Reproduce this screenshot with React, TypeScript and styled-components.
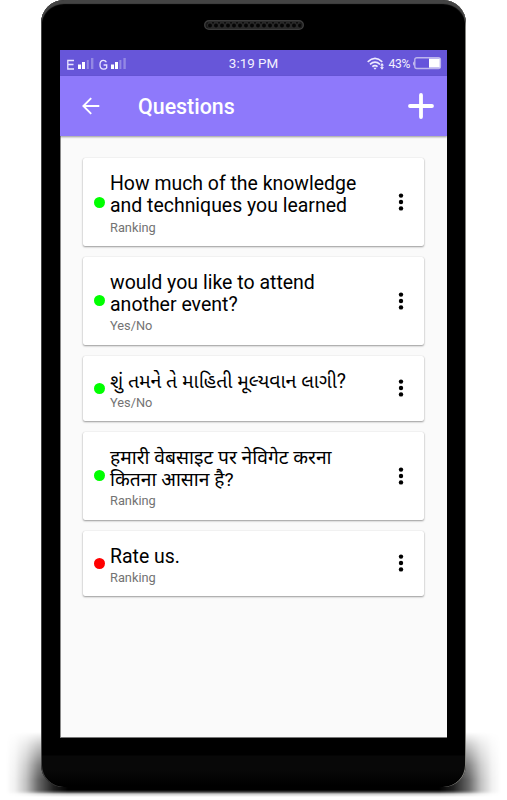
import React from "react";
import styled, { createGlobalStyle } from "styled-components";

const GlobalStyle = createGlobalStyle`
  * { box-sizing: border-box; }
  html, body { margin: 0; background: #fff; }
  body { font-family: Roboto, "Noto Sans", "Noto Sans Gujarati", "Noto Sans Devanagari", sans-serif; overflow: hidden; }
`;

const Stage = styled.div`
  position: relative;
  width: 507px;
  height: 800px;
  padding-left: 41px;
  background: #fff;
  overflow: hidden;
`;

const GroundShadow = styled.div`
  position: absolute;
  top: 732px;
  left: 6px;
  right: 6px;
  height: 65px;
  background: linear-gradient(
    to right,
    transparent 0, rgba(0, 0, 0, 0.06) 9px, rgba(0, 0, 0, 0.24) 20px,
    rgba(0, 0, 0, 0.58) 32px, rgba(0, 0, 0, 0.88) 48px, #000 62px,
    #000 calc(100% - 62px), rgba(0, 0, 0, 0.88) calc(100% - 48px), rgba(0, 0, 0, 0.58) calc(100% - 32px),
    rgba(0, 0, 0, 0.24) calc(100% - 20px), rgba(0, 0, 0, 0.06) calc(100% - 9px), transparent 100%
  );
  mask-image: linear-gradient(
    to bottom,
    transparent 0, rgba(0, 0, 0, 0.35) 13px, rgba(0, 0, 0, 0.8) 33px, #000 48px,
    #000 58px, rgba(0, 0, 0, 0.75) 60px, rgba(0, 0, 0, 0.2) 62px, transparent 65px
  );
`;

const Phone = styled.div`
  position: relative;
  width: 425px;
  height: 787px;
  border-radius: 23px 23px 22px 22px;
  background: linear-gradient(to bottom, #000 755px, #080808 756px, #080808 770px, #000 785px);
  box-shadow: inset 0 4px 1px #444, inset 1px 0 0 #484848, inset -1px 0 0 #8b8b86;
  padding: 20px 19px 0 20px;
  display: flex;
  flex-direction: column;
`;

const Speaker = styled.svg`
  display: block;
  align-self: center;
  width: 100px;
  height: 10px;
  margin-bottom: 20px;
  flex: none;
`;

const Screen = styled.div`
  width: 387px;
  margin-left: -1px;
  height: 688px;
  background: #fafafa;
  box-shadow: inset 0 -1px #777, inset 1px 0 #8a8a8a;
  overflow: hidden;
`;

const StatusBar = styled.header`
  height: 26px;
  background: #6756d9;
  color: #f3f1ff;
  display: grid;
  grid-template-columns: 1fr auto 1fr;
  align-items: center;
  padding: 0 5px;
`;

const StatusGroup = styled.div<{ $end?: boolean }>`
  display: flex;
  align-items: center;
  justify-content: ${(p) => (p.$end ? "flex-end" : "flex-start")};
`;

const SignalIcon = styled.svg`
  display: block;
  width: 62px;
  height: 14px;
`;

const Clock = styled.time`
  font-size: 13.4px;
  line-height: 26px;
  padding-top: 1px;
`;

const Percent = styled.span`
  font-size: 12.1px;
  line-height: 26px;
  margin: 0 3px 0 4px;
  letter-spacing: -0.3px;
`;

const Toolbar = styled.nav`
  height: 60px;
  background: #8e79fb;
  color: #fff;
  display: flex;
  align-items: center;
  padding: 0 13px 0 22px;
  box-shadow: 0 1px 2px rgba(0, 0, 0, 0.4);
`;

const Title = styled.h1`
  margin: 2px auto 0 38px;
  font-size: 21.4px;
  line-height: 28px;
  font-weight: 500;
`;

const IconButton = styled.button`
  appearance: none;
  padding: 0;
  border: 0;
  background: none;
  color: inherit;
  display: flex;
`;

const List = styled.ul`
  list-style: none;
  margin: 0;
  padding: 22px 23px 0 23px;
  display: flex;
  flex-direction: column;
  gap: 10.8px;
`;

const Card = styled.li<{ $lines: number }>`
  height: ${(p) => (p.$lines === 2 ? 88 : 65.4)}px;
  border-radius: 2px;
  background: #fff;
  box-shadow: 0 1px 2px rgba(0, 0, 0, 0.38), 0 0 1px rgba(0, 0, 0, 0.16);
  display: grid;
  grid-template-columns: 11px 1fr 6px;
  align-items: center;
  column-gap: 5px;
  padding: 0 20px 0 11px;
`;

const Dot = styled.span<{ $active: boolean }>`
  width: 11px;
  height: 11px;
  border-radius: 50%;
  background: ${(p) => (p.$active ? "#00ff00" : "#ff0000")};
`;

const Copy = styled.div`
  padding-top: 5.8px;
`;

const Question = styled.p<{ $size: number }>`
  margin: 0;
  color: #000;
  font-size: ${(p) => p.$size}px;
  line-height: 22.3px;
  white-space: pre;
`;

const Kind = styled.p`
  margin: 0;
  color: #737373;
  font-size: 12.8px;
  line-height: 19px;
`;

type Item = { lines: string[]; kind: string; active: boolean; size: number };

const items: Item[] = [
  { lines: ["How much of the knowledge", "and techniques you learned"], kind: "Ranking", active: true, size: 19.45 },
  { lines: ["would you like to attend", "another event?"], kind: "Yes/No", active: true, size: 19.5 },
  { lines: ["શું તમને તે માહિતી મૂલ્યવાન લાગી?"], kind: "Yes/No", active: true, size: 19.45 },
  { lines: ["हमारी वेबसाइट पर नेविगेट करना", "कितना आसान है?"], kind: "Ranking", active: true, size: 19.25 },
  { lines: ["Rate us."], kind: "Ranking", active: false, size: 19.45 },
];

const Signals = () => (
  <SignalIcon viewBox="0 0 62 14" fill="none">
    <path d="M9 3.5H2.8V12H9M2.8 7.5H8.5" stroke="#e9e5ff" strokeWidth="1.3" />
    <path d="M41.4 5.3C40.8 4 39.8 3.4 38.4 3.4C36.2 3.4 35 5 35 7.7C35 10.5 36.2 12.1 38.6 12.1C39.9 12.1 41 11.7 41.7 10.8V8H38.6" stroke="#e9e5ff" strokeWidth="1.3" />
    <path d="M13 7.5h3V12h-3zM17 5h3v7h-3zM46 7.5h3V12h-3zM50 5h3v7h-3z" fill="#fff" />
    <path d="M21.8 3h2v9h-2zM26 1h2.4v11H26zM54.4 3h2v9h-2zM58.4 1h2.4v11h-2.4z" fill="#9388e4" />
  </SignalIcon>
);

const Wifi = () => (
  <svg width="17" height="14" viewBox="0 0 17 14" fill="none" stroke="#eeebff" strokeWidth="1.6">
    <path d="M.7 4.8Q8 -1.9 15.3 4.8M3 7.3Q8 2.8 13 7.3M5.3 9.7Q8 7.4 10.6 9.7" />
    <path d="M6.3 10.8h3.4L8 12.8zM13 8.5L15 6l2 2.5zM13 10.3h4L15 12.7z" fill="#eeebff" stroke="none" />
    <path d="M15 8v3.5" strokeWidth="1.2" />
  </svg>
);

const Battery = () => (
  <svg width="29" height="13" viewBox="0 0 29 13">
    <path d="M2.5 4Q0 4 0 6.5T2.5 9z" fill="#c5beee" />
    <rect x="1.8" y=".7" width="25.6" height="10.8" rx="2" fill="#6553db" stroke="#bdb5ed" strokeWidth="1.4" />
    <path d="M16 1.6h10.8v9H16z" fill="#fff" />
  </svg>
);

const More = () => (
  <svg width="6" height="18" viewBox="0 0 6 18" fill="#000">
    <circle cx="3" cy="2.6" r="2.2" />
    <circle cx="3" cy="9" r="2.2" />
    <circle cx="3" cy="15.4" r="2.2" />
  </svg>
);

export default function App() {
  return (
    <Stage>
      <GlobalStyle />
      <GroundShadow />
      <Phone>
        <Speaker viewBox="0 0 100 10">
          <defs>
            <pattern id="mesh" x="3" y="2" width="6" height="6" patternUnits="userSpaceOnUse">
              <rect width="6" height="6" fill="#282828" />
              <circle cx="3" cy="3.4" r="2" fill="#050505" />
              <circle cx="0" cy=".8" r="1" fill="#0c0c0c" />
              <circle cx="6" cy=".8" r="1" fill="#0c0c0c" />
            </pattern>
          </defs>
          <rect x=".7" y=".7" width="98.6" height="8.6" rx="4.3" fill="#191919" stroke="#3c3c3c" strokeWidth="1.4" />
          <rect x="3" y="2" width="94" height="6" rx="3" fill="url(#mesh)" />
        </Speaker>
        <Screen>
          <StatusBar>
            <StatusGroup><Signals /></StatusGroup>
            <Clock>3:19 PM</Clock>
            <StatusGroup $end>
              <Wifi />
              <Percent>43%</Percent>
              <Battery />
            </StatusGroup>
          </StatusBar>
          <Toolbar>
            <IconButton aria-label="Back">
              <svg width="18" height="18" viewBox="0 0 18 18" fill="none" stroke="#fff" strokeWidth="1.9">
                <path d="M17.3 9H1.7M9.2 1.2L1.4 9l7.8 7.8" />
              </svg>
            </IconButton>
            <Title>Questions</Title>
            <IconButton aria-label="Add">
              <svg width="28" height="28" viewBox="0 0 28 28" stroke="#fff" strokeWidth="3.8" strokeLinecap="round">
                <path d="M15 3v22M4 14h22" />
              </svg>
            </IconButton>
          </Toolbar>
          <List>
            {items.map((item) => (
              <Card key={item.lines[0]} $lines={item.lines.length}>
                <Dot $active={item.active} />
                <Copy>
                  <Question $size={item.size}>{item.lines.join("\n")}</Question>
                  <Kind>{item.kind}</Kind>
                </Copy>
                <IconButton aria-label="More options"><More /></IconButton>
              </Card>
            ))}
          </List>
        </Screen>
      </Phone>
    </Stage>
  );
}
